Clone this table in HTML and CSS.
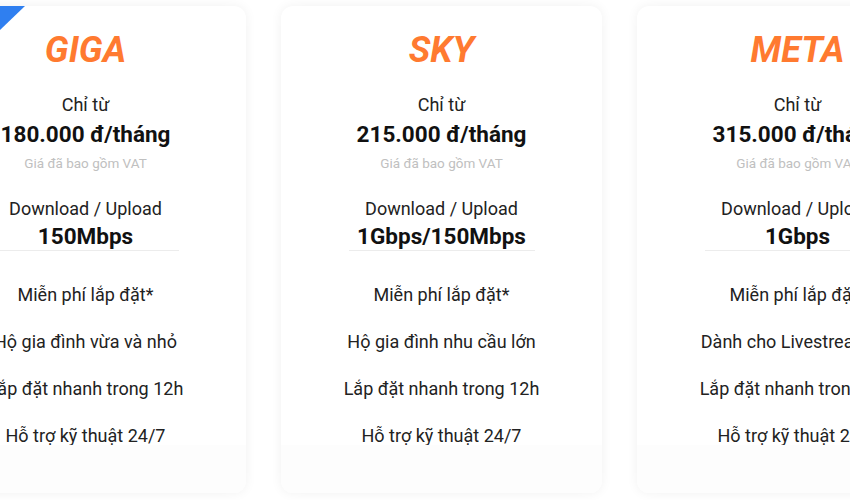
FILE: index.html
```html
<!DOCTYPE html>
<html lang="vi">
<head>
<meta charset="utf-8">
<title>Bảng giá</title>
<link rel="stylesheet" href="styles.css">
</head>
<body>
<div class="viewport">
  <div class="track">
    <div class="card">
      <div class="ribbon"></div>
      <div class="card-body">
        <h2 class="name">GIGA</h2>
        <div class="from">Chỉ từ</div>
        <div class="price">180.000 đ/tháng</div>
        <div class="vat">Giá đã bao gồm VAT</div>
        <div class="dl">Download / Upload</div>
        <div class="speed">150Mbps</div>
        <ul class="features">
          <li>Miễn phí lắp đặt*</li>
          <li>Hộ gia đình vừa và nhỏ</li>
          <li>Lắp đặt nhanh trong 12h</li>
          <li>Hỗ trợ kỹ thuật 24/7</li>
        </ul>
      </div>
      <div class="card-foot"></div>
    </div>
    <div class="card">
      <div class="card-body">
        <h2 class="name">SKY</h2>
        <div class="from">Chỉ từ</div>
        <div class="price">215.000 đ/tháng</div>
        <div class="vat">Giá đã bao gồm VAT</div>
        <div class="dl">Download / Upload</div>
        <div class="speed">1Gbps/150Mbps</div>
        <ul class="features">
          <li>Miễn phí lắp đặt*</li>
          <li>Hộ gia đình nhu cầu lớn</li>
          <li>Lắp đặt nhanh trong 12h</li>
          <li>Hỗ trợ kỹ thuật 24/7</li>
        </ul>
      </div>
      <div class="card-foot"></div>
    </div>
    <div class="card">
      <div class="card-body">
        <h2 class="name">META</h2>
        <div class="from">Chỉ từ</div>
        <div class="price">315.000 đ/tháng</div>
        <div class="vat">Giá đã bao gồm VAT</div>
        <div class="dl">Download / Upload</div>
        <div class="speed">1Gbps</div>
        <ul class="features">
          <li>Miễn phí lắp đặt*</li>
          <li>Dành cho Livestreamers</li>
          <li>Lắp đặt nhanh trong 12h</li>
          <li>Hỗ trợ kỹ thuật 24/7</li>
        </ul>
      </div>
      <div class="card-foot"></div>
    </div>
  </div>
</div>
</body>
</html>
```

FILE: styles.css
```css
html, body {
  margin: 0;
  padding: 0;
  background: #ffffff;
  font-family: Roboto, "Noto Sans", Arial, sans-serif;
  color: #222;
}

.viewport {
  width: 850px;
  height: 500px;
  overflow: hidden;
}

.track {
  display: flex;
  gap: 35px;
  margin-left: -75px;
  padding-top: 6px;
}

.card {
  flex: 0 0 321px;
  width: 321px;
  height: 487px;
  background: #fff;
  border-radius: 12px;
  box-shadow: 0 0 12px rgba(0, 0, 0, 0.06);
  position: relative;
  overflow: hidden;
  display: flex;
  flex-direction: column;
  text-align: center;
}

.ribbon {
  position: absolute;
  top: 0;
  left: 0;
  width: 100px;
  height: 24px;
  background: #2f7ff0;
  clip-path: polygon(0 0, 100px 0, 75px 24px, 0 24px);
}

.card-body {
  height: 439px;
  display: flex;
  flex-direction: column;
  align-items: center;
}

.card-foot {
  flex: 1;
  background: #fdfdfd;
}

.name {
  margin: 22px 0 0;
  font-size: 36px;
  line-height: 44px;
  font-weight: 700;
  font-style: italic;
  color: #ff7a30;
}

.from {
  margin-top: 19px;
  font-size: 18px;
  line-height: 28px;
}

.price {
  font-size: 22.5px;
  line-height: 30px;
  font-weight: 700;
  color: #111;
}

.vat {
  margin-top: 5px;
  font-size: 13.5px;
  line-height: 18px;
  color: #c0c0c0;
}

.dl {
  margin-top: 23px;
  font-size: 18px;
  line-height: 28px;
}

.speed {
  width: 186px;
  font-size: 22.5px;
  line-height: 27px;
  font-weight: 700;
  color: #111;
  border-bottom: 1px solid #ececec;
}

.features {
  list-style: none;
  margin: 20px 0 0;
  padding: 0;
}

.features li {
  font-size: 18px;
  line-height: 47px;
}
```
